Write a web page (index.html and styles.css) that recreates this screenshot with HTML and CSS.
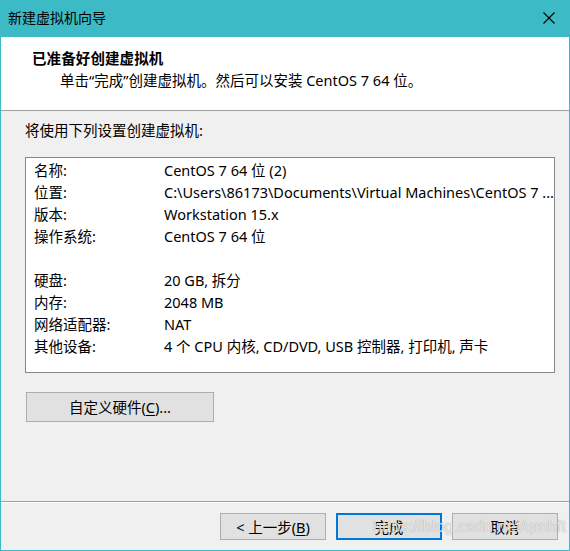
FILE: index.html
```html
<!DOCTYPE html>
<html lang="zh-CN">
<head>
<meta charset="utf-8">
<title>新建虚拟机向导</title>
<link rel="stylesheet" href="styles.css">
</head>
<body>
<div class="window">
  <div class="titlebar">
    <span class="title">新建虚拟机向导</span>
    <span class="close">
      <svg width="12" height="12" viewBox="0 0 12 12"><path d="M0.5 0.5 L11.5 11.5 M11.5 0.5 L0.5 11.5" stroke="#000" stroke-width="1.1" fill="none"/></svg>
    </span>
  </div>
  <div class="header">
    <div class="heading">已准备好创建虚拟机</div>
    <div class="subheading">单击“完成”创建虚拟机。然后可以安装 CentOS 7 64 位。</div>
  </div>
  <div class="content">
    <div class="intro">将使用下列设置创建虚拟机:</div>
    <div class="listbox">
      <div class="row"><span class="label">名称:</span><span class="value">CentOS 7 64 位 (2)</span></div>
      <div class="row"><span class="label">位置:</span><span class="value">C:\Users\86173\Documents\Virtual Machines\CentOS 7 ...</span></div>
      <div class="row"><span class="label">版本:</span><span class="value">Workstation 15.x</span></div>
      <div class="row"><span class="label">操作系统:</span><span class="value">CentOS 7 64 位</span></div>
      <div class="row"><span class="label"></span><span class="value"></span></div>
      <div class="row"><span class="label">硬盘:</span><span class="value">20 GB, 拆分</span></div>
      <div class="row"><span class="label">内存:</span><span class="value">2048 MB</span></div>
      <div class="row"><span class="label">网络适配器:</span><span class="value">NAT</span></div>
      <div class="row"><span class="label">其他设备:</span><span class="value">4 个 CPU 内核, CD/DVD, USB 控制器, 打印机, 声卡</span></div>
    </div>
    <button class="btn custom">自定义硬件(<u>C</u>)...</button>
  </div>
  <div class="footer">
    <button class="btn">&lt; 上一步(<u>B</u>)</button>
    <button class="btn primary">完成</button>
    <button class="btn">取消</button>
    <span class="watermark">https://blog.csdn.net/qmhft</span>
  </div>
</div>
</body>
</html>
```
FILE: styles.css
```css
* { box-sizing: border-box; }
html, body { margin: 0; padding: 0; }
body {
  font-family: "Noto Sans", "Noto Sans CJK SC", sans-serif;
  font-size: 14.5px;
  color: #000;
  background: #f0f0f0;
}
.window {
  width: 570px;
  height: 551px;
  display: flex;
  flex-direction: column;
  border-left: 1px solid #3cbac5;
  border-right: 1px solid #3cbac5;
  border-bottom: 1px solid #3cbac5;
  background: #f0f0f0;
  position: relative;
}
.titlebar {
  height: 37px;
  flex: none;
  background: #3cbac5;
  display: flex;
  align-items: center;
  justify-content: space-between;
  padding-left: 8px;
  padding-right: 15px;
  margin: 0 -1px;
  padding-bottom: 1px;
}
.title { font-size: 14px; line-height: 20px; }
.close { display: flex; width: 12px; height: 12px; }
.header {
  flex: none;
  height: 74px;
  background: #fff;
  border-bottom: 1px solid #a0a0a0;
  padding-top: 10px;
}
.heading {
  font-weight: bold;
  line-height: 22px;
  padding-left: 31px;
  letter-spacing: 0.1px;
}
.subheading {
  line-height: 22px;
  padding-left: 59px;
}
.content {
  flex: 1;
  padding: 8px 0 0 24px;
  border-bottom: 1px solid #a0a0a0;
}
.intro { line-height: 22px; }
.listbox {
  margin-top: 16px;
  width: 530px;
  height: 216px;
  background: #fff;
  border: 1px solid #828790;
  padding: 1px 0 0 8px;
}
.row { display: flex; height: 22px; line-height: 22px; }
.label { width: 130px; flex: none; }
.value { white-space: nowrap; }
.btn {
  font-family: "Noto Sans", "Noto Sans CJK SC", sans-serif;
  font-size: 14.5px;
  color: #000;
  background: #e1e1e1;
  border: 1px solid #adadad;
  padding: 0;
  height: 27px;
  width: 106px;
  line-height: 24px;
}
.btn u { text-underline-offset: 2px; }
.custom {
  display: block;
  margin-top: 19px;
  margin-left: 1px;
  width: 188px;
  height: 30px;
}
.footer {
  flex: none;
  height: 48px;
  border-top: 1px solid #fff;
  display: flex;
  justify-content: flex-end;
  align-items: flex-start;
  gap: 10px;
  padding: 10px 11px 0 0;
  position: relative;
}
.primary { border: 2px solid #0078d7; }
.watermark {
  position: absolute;
  left: 372px;
  top: 15px;
  font-family: "Liberation Sans", Arial, sans-serif;
  font-size: 16px;
  color: rgba(255, 255, 255, 0.75);
  text-shadow: 0 0 1px rgba(120, 120, 120, 0.8);
  pointer-events: none;
  letter-spacing: 0.2px;
}
```
